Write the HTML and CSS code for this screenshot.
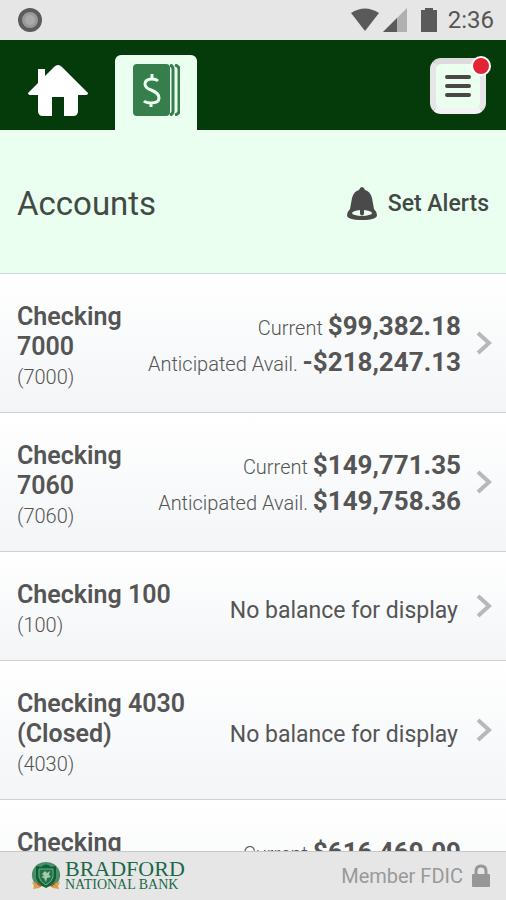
FILE: index.html
```html
<!DOCTYPE html>
<html lang="en">
<head>
    <meta charset="UTF-8">
    <meta name="viewport" content="width=device-width, initial-scale=1.0">
    <title>Accounts - Bradford National Bank</title>
    <link rel="stylesheet" href="styles.css">
</head>
<body>
    <svg class="defs" width="0" height="0" aria-hidden="true">
        <symbol id="chevron" viewBox="0 0 16 24">
            <path d="M2 2l11 10L2 22" fill="none" stroke="#b8b8b8" stroke-width="4"/>
        </symbol>
    </svg>

    <div class="status-bar">
        <svg width="24" height="24" viewBox="0 0 24 24">
            <circle cx="12" cy="12" r="10" fill="#999" stroke="#5c5c5c" stroke-width="4"/>
            <circle cx="12" cy="12" r="5" fill="#aaa"/>
        </svg>
        <div class="status-icons">
            <svg width="28" height="24" viewBox="0 0 28 24">
                <path d="M0 5Q14-4 28 5L14 23z" fill="#5a5a5a"/>
            </svg>
            <svg width="24" height="24" viewBox="0 0 24 24">
                <path d="M24 0v24H0z" fill="#b0b0b0"/>
                <path d="M14 10v14H0z" fill="#5a5a5a"/>
            </svg>
            <svg class="battery" width="16" height="24" viewBox="0 0 16 24">
                <path d="M4 0h8v2h4v22H0V2h4z" fill="#5a5a5a"/>
            </svg>
            <span class="clock">2:36</span>
        </div>
    </div>

    <header class="header">
        <nav class="tabs">
            <a class="tab" href="#" aria-label="Home">
                <svg width="60" height="54" viewBox="0 0 60 54">
                    <path d="M10 5h7v7L26 3q4-4 8 0l26 26q0 2-3 2h-7v16q0 5-5 5h-9V33H24v19h-9q-5 0-5-5V31H3q-3 0-3-2l10-10z" fill="#fff"/>
                </svg>
            </a>
            <a class="tab active" href="#" aria-label="Accounts">
                <svg width="48" height="52" viewBox="0 0 48 52">
                    <rect x="1" width="37" height="52" rx="4" fill="#367e4b"/>
                    <path d="M38 1q3 1 3 4v42q0 3-3 4M43 1q4 1 4 4v42q0 3-4 4" fill="none" stroke="#367e4b" stroke-width="3"/>
                    <path d="M26 17q-2-2-6-2-7 0-7 5 0 4 6 6 8 3 8 8 0 5-8 5-5 0-7-2M20 10v6M19 38v5" fill="none" stroke="#eafff0" stroke-width="3"/>
                </svg>
            </a>
        </nav>
        <button class="menu" type="button" aria-label="Menu">
            <svg width="28" height="24" viewBox="0 0 28 24">
                <path d="M3 3h22M3 12h22M3 21h22" stroke="#4b4745" stroke-width="4" stroke-linecap="round"/>
            </svg>
            <span class="badge"></span>
        </button>
    </header>

    <div class="title-bar">
        <h1>Accounts</h1>
        <a class="alerts" href="#">
            <svg width="30" height="34" viewBox="0 0 30 34">
                <path d="M15 0q2 0 3 3 5 1 7 8l2 11q3 3 3 6 0 5-15 5T0 28q0-3 3-6L5 11q2-7 7-8 1-3 3-3z" fill="#4a4a4a"/>
                <ellipse cx="15" cy="26" rx="10" ry="3" fill="#eafff0"/>
                <path d="M13 23h4v4q-2 3-4 0z" fill="#4a4a4a"/>
            </svg>
            Set Alerts
        </a>
    </div>

    <main class="accounts">
        <a class="account" href="#">
            <div class="name">
                <h2>Checking 7000</h2>
                <p>(7000)</p>
            </div>
            <div class="balance">
                <p>Current <strong>$99,382.18</strong></p>
                <p>Anticipated Avail. <strong>-$218,247.13</strong></p>
            </div>
            <svg class="chevron"><use href="#chevron"/></svg>
        </a>
        <a class="account" href="#">
            <div class="name">
                <h2>Checking 7060</h2>
                <p>(7060)</p>
            </div>
            <div class="balance">
                <p>Current <strong>$149,771.35</strong></p>
                <p>Anticipated Avail. <strong>$149,758.36</strong></p>
            </div>
            <svg class="chevron"><use href="#chevron"/></svg>
        </a>
        <a class="account" href="#">
            <div class="name">
                <h2>Checking 100</h2>
                <p>(100)</p>
            </div>
            <div class="no-balance">No balance for display</div>
            <svg class="chevron"><use href="#chevron"/></svg>
        </a>
        <a class="account" href="#">
            <div class="name">
                <h2>Checking 4030 (Closed)</h2>
                <p>(4030)</p>
            </div>
            <div class="no-balance">No balance for display</div>
            <svg class="chevron"><use href="#chevron"/></svg>
        </a>
        <a class="account" href="#">
            <div class="name">
                <h2>Checking 7080</h2>
                <p>(7080)</p>
            </div>
            <div class="balance">
                <p>Current <strong>$616,469.09</strong></p>
                <p>Anticipated Avail. <strong>$616,469.09</strong></p>
            </div>
            <svg class="chevron"><use href="#chevron"/></svg>
        </a>
    </main>

    <footer class="footer">
        <div class="brand">
            <svg width="30" height="28" viewBox="0 0 30 28">
                <path d="M7 2q8-4 16 0 7 5 6 13-1 6-6 9H7q-5-3-6-9Q0 7 7 2z" fill="#4d8b69"/>
                <path d="M5 4l5 1q5-5 10 0l5-1v12q-2 7-10 10Q7 23 5 16z" fill="#086337"/>
                <path d="M8 7h14v8q-1 5-7 8-6-3-7-8z" fill="#23734b" stroke="#7dac88"/>
                <path d="M11 12l3-3 2 2 3-2-1 4 2 2-4 1-1 4-2-4-3-1 3-1z" fill="#a8c9ac"/>
                <path d="M1 20l5 1 4 3q5 2 10 0l4-3 5-1-2 4 1 3-6-1-3-2q-4 2-8 0l-3 2-6 1 1-3z" fill="#d7a04c"/>
                <path d="M6 21l4 3M24 21l-4 3" stroke="#a65b28" stroke-width="2"/>
            </svg>
            <div class="brand-name">
                <span class="brand-top">BRADFORD</span>
                <span class="brand-bottom">NATIONAL BANK</span>
            </div>
        </div>
        <div class="fdic">
            Member FDIC
            <svg width="18" height="24" viewBox="0 0 18 24">
                <path d="M4 11V7q0-5 5-5t5 5v4" fill="none" stroke="#979797" stroke-width="3"/>
                <rect y="10" width="18" height="13" rx="1" fill="#979797"/>
            </svg>
        </div>
    </footer>
</body>
</html>
```

FILE: styles.css
```css
* {
    box-sizing: border-box;
}
body {
    display: flex;
    flex-direction: column;
    height: 100vh;
    margin: 0;
    font-family: Roboto, Arial, sans-serif;
    color: #555;
    background-color: #fff;
}
h1, h2, p {
    margin: 0;
}
a {
    color: inherit;
    text-decoration: none;
}
svg {
    flex-shrink: 0;
}
.defs {
    position: absolute;
}

/* status bar */
.status-bar {
    display: flex;
    align-items: center;
    justify-content: space-between;
    flex-shrink: 0;
    height: 40px;
    padding: 0 12px 0 18px;
    background-color: #e6e6e6;
}
.status-icons {
    display: flex;
    align-items: center;
    gap: 4px;
}
.battery {
    margin: 0 7px 0 10px;
}
.clock {
    font-size: 24px;
    line-height: 40px;
}

/* header */
.header {
    display: flex;
    align-items: center;
    justify-content: space-between;
    flex-shrink: 0;
    height: 90px;
    padding: 2px 20px 0 0;
    background-color: #053b0a;
}
.tabs {
    display: flex;
    align-self: flex-end;
}
.tab {
    display: flex;
    justify-content: center;
    width: 115px;
    height: 75px;
    padding-top: 9px;
}
.tab.active {
    width: 82px;
    border-radius: 6px 6px 0 0;
    background-color: #eafff0;
}
.menu {
    position: relative;
    display: flex;
    align-items: center;
    justify-content: center;
    width: 56px;
    height: 56px;
    padding: 0;
    border: 6px solid #e3e3e3;
    border-color: #dcdcdc #e6e6e6 #f3f3f3;
    border-radius: 11px;
    background-color: #eafff0;
}
.badge {
    position: absolute;
    top: -8px;
    right: -11px;
    width: 20px;
    height: 20px;
    border: 2px solid #fff;
    border-radius: 50%;
    background-color: #e22435;
}

/* title */
.title-bar {
    display: flex;
    align-items: center;
    justify-content: space-between;
    flex-shrink: 0;
    height: 144px;
    padding: 4px 17px 0;
    border-bottom: 1px solid #ccd8d0;
    background-color: #eafff0;
    color: #434a45;
}
h1 {
    font-size: 33px;
    font-weight: 400;
}
.alerts {
    display: flex;
    align-items: center;
    gap: 11px;
    font-size: 23px;
    font-weight: 500;
}

/* accounts */
.accounts {
    flex: 1;
    min-height: 0;
    overflow-y: auto;
    scrollbar-width: none;
}
.account {
    display: flex;
    align-items: center;
    padding: 28px 14px 20px 17px;
    border-bottom: 1px solid #cfd1d3;
    background: linear-gradient(#fff, #f3f5f7);
}
.name {
    flex: 1;
    line-height: 30px;
    font-size: 20px;
    font-weight: 300;
}
h2 {
    max-width: 180px;
    font-size: 25px;
    font-weight: 600;
}
.balance {
    flex-shrink: 0;
    margin-top: -2px;
    line-height: 36px;
    font-size: 20px;
    font-weight: 300;
    text-align: right;
}
.balance strong {
    font-size: 26px;
    font-weight: 700;
    line-height: 26px;
}
.no-balance {
    margin-right: 3px;
    font-size: 23px;
}
.chevron {
    width: 16px;
    height: 24px;
    margin: -8px 0 0 15px;
}

/* footer */
.footer {
    display: flex;
    align-items: center;
    justify-content: space-between;
    flex-shrink: 0;
    height: 49px;
    padding: 0 16px 0 31px;
    border-top: 1px solid #c8c8c8;
    background-color: #e6e6e6;
}
.brand {
    display: flex;
    align-items: center;
    gap: 4px;
    font-family: "Liberation Serif", "Times New Roman", serif;
    color: #1d6848;
}
.brand-name {
    display: flex;
    flex-direction: column;
}
.brand-top {
    font-size: 22px;
    line-height: 18px;
}
.brand-bottom {
    font-size: 14px;
    line-height: 14px;
}
.fdic {
    display: flex;
    align-items: center;
    gap: 9px;
    font-size: 20px;
    color: #999;
}
```
